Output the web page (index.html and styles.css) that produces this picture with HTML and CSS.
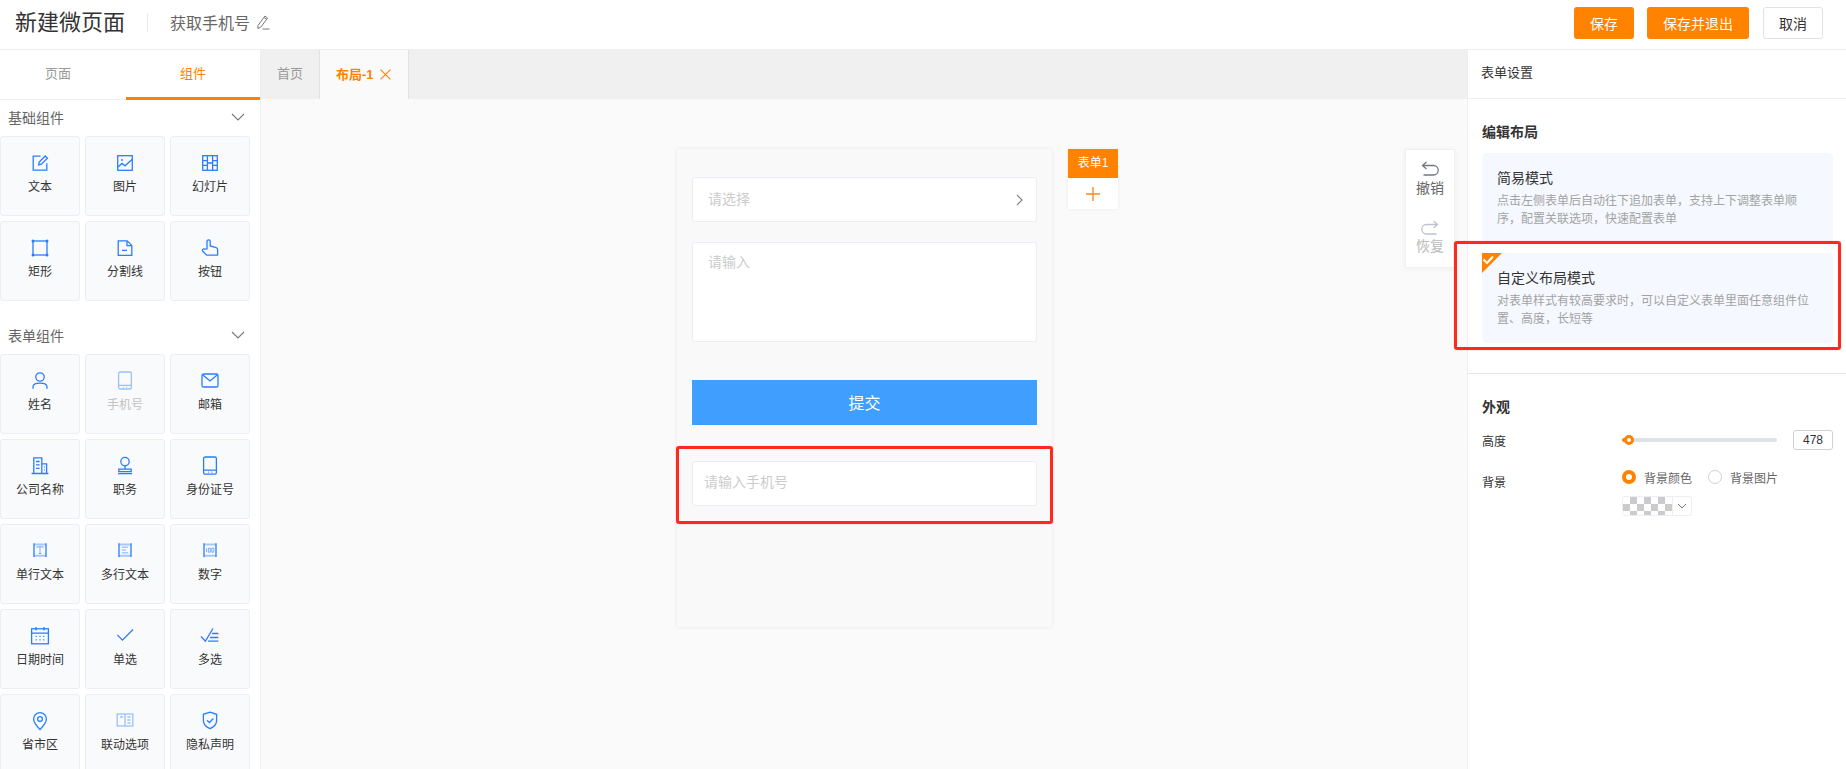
FILE: index.html
```html
<!DOCTYPE html>
<html lang="zh-CN">
<head>
<meta charset="utf-8">
<title>新建微页面</title>
<link rel="stylesheet" href="styles.css">
</head>
<body>
<div class="app">
  <header class="topbar">
    <h1 class="page-title">新建微页面</h1>
    <span class="top-divider"></span>
    <span class="page-name">获取手机号</span>
    <svg class="edit-ic" viewBox="0 0 14 16"><path d="M2 11.5L9 2l2.6 2L4.6 13.4 1.8 14.4z"/><path d="M8 3.4l2.6 2"/><path d="M6.5 15h7"/></svg>
    <div class="top-actions">
      <button class="btn btn-primary btn-save">保存</button>
      <button class="btn btn-primary btn-exit">保存并退出</button>
      <button class="btn btn-plain">取消</button>
    </div>
  </header>
  <main class="workspace">
    <aside class="sidebar">
      <div class="side-tabs">
        <div class="side-tab">页面</div>
        <div class="side-tab side-tab-on">组件</div>
      </div>
      <div class="group-head"><span>基础组件</span><svg class="chev" viewBox="0 0 14 8"><path d="M1 1l6 6 6-6"/></svg></div>
      <div class="comp-grid">
        <div class="comp"><svg class="ic" viewBox="0 0 20 20"><path d="M10.500 3.200H3.200v14h13.600v-7"/><path d="M8.600 11.800l.6-2.800 6-6 2.200 2.200-6 6z"/></svg><span>文本</span></div>
        <div class="comp"><svg class="ic" viewBox="0 0 20 20"><rect x="2.700" y="2.700" width="14.600" height="14.600"/><path d="M3 14l4-3.600 3 2.400 7-6.400"/><circle class="dot" cx="7" cy="7" r="1"/></svg><span>图片</span></div>
        <div class="comp"><svg class="ic" viewBox="0 0 20 20"><rect x="2.700" y="2.700" width="14.600" height="14.600"/><path d="M7.400 3v14M12.600 3v14M3 7.600h4.400M3 12.400h4.400M12.600 7.600H17M12.600 12.400H17M7.400 10h5.200"/></svg><span>幻灯片</span></div>
        <div class="comp"><svg class="ic" viewBox="0 0 20 20"><rect x="3" y="3" width="14" height="14"/><circle class="dot" cx="3" cy="3" r="1.500"/><circle class="dot" cx="17" cy="3" r="1.500"/><circle class="dot" cx="3" cy="17" r="1.500"/><circle class="dot" cx="17" cy="17" r="1.500"/></svg><span>矩形</span></div>
        <div class="comp"><svg class="ic" viewBox="0 0 20 20"><path d="M3.200 2.800h9l4.600 4.600v10H3.200z"/><path d="M12 3v4.600h4.600M7 12.400h5"/></svg><span>分割线</span></div>
        <div class="comp"><svg class="ic" viewBox="0 0 20 20"><path d="M7 11V3.400a1.600 1.600 0 0 1 3.200 0V8l6 1.600c1 .3 1.400 1 1.400 2v5.600H6.600L2.600 13c-.8-1.200.8-2.800 2-1.800z"/></svg><span>按钮</span></div>
      </div>
      <div class="group-head group-head-second"><span>表单组件</span><svg class="chev" viewBox="0 0 14 8"><path d="M1 1l6 6 6-6"/></svg></div>
      <div class="comp-grid">
        <div class="comp"><svg class="ic" viewBox="0 0 20 20"><circle cx="10" cy="6" r="4.200"/><path d="M3 17.800v-2c0-2.400 2.600-3.600 7-3.600s7 1.200 7 3.600v2"/></svg><span>姓名</span></div>
        <div class="comp comp-off"><svg class="ic" viewBox="0 0 20 20"><rect x="3.600" y="1" width="12.800" height="17" rx="1.600"/><path d="M4 14.400h12M8 16.400h.8M11.400 16.400h.8"/></svg><span>手机号</span></div>
        <div class="comp"><svg class="ic" viewBox="0 0 20 20"><rect x="2" y="3" width="16" height="13" rx="1.600"/><path d="M2.600 3.800L10 10l7.400-6.200"/></svg><span>邮箱</span></div>
        <div class="comp"><svg class="ic" viewBox="0 0 20 20"><path d="M1.600 17.500h16.800M3.800 17.500V1.900h8v15.600M11.800 7.900h4.800v9.600M6 5.500h3.600M6 8.900h3.600M6 12.300h3.600M14 10.900h.8M14 13.900h.8"/></svg><span>公司名称</span></div>
        <div class="comp"><svg class="ic" viewBox="0 0 20 20"><circle cx="10" cy="5.600" r="4.200"/><path d="M10 9.800v3.400M3.800 13.200h12.400v2.400H3.800zM3 17.600h14"/></svg><span>职务</span></div>
        <div class="comp"><svg class="ic" viewBox="0 0 20 20"><rect x="3.600" y="1" width="12.800" height="17.200" rx="1.600"/><path d="M4 14.200h12M8 16.200h.8M11.400 16.200h.8"/></svg><span>身份证号</span></div>
        <div class="comp"><svg class="ic" viewBox="0 0 20 20"><path class="soft" d="M4 3.500h12M4 14.700h12"/><path d="M4 2.300v13.600M16 2.300v13.600"/><path class="thin" d="M7 7V5.800h6V7M10 5.800v6.800M8.600 12.600h2.800"/></svg><span>单行文本</span></div>
        <div class="comp"><svg class="ic" viewBox="0 0 20 20"><path class="soft" d="M4 3.500h12M4 14.700h12"/><path d="M4 2.300v13.600M16 2.300v13.600"/><path class="thin" d="M6.800 6.200h6.400M6.800 9h4.200M6.800 11.800h6.400"/></svg><span>多行文本</span></div>
        <div class="comp"><svg class="ic" viewBox="0 0 20 20"><path class="soft" d="M4 3.500h12M4 14.700h12"/><path d="M4 2.300v13.600M16 2.300v13.600"/><path class="thin" d="M6.600 7.200v4M8.400 7.200h2v4h-2zM11.800 7.200h2v4h-2z"/></svg><span>数字</span></div>
        <div class="comp"><svg class="ic" viewBox="0 0 20 20"><rect x="1.600" y="2.800" width="16.800" height="15"/><path d="M2 7.200h16M6 1v3.400M14 1v3.400M5.600 10.400h1.200M9.400 10.400h1.200M13.200 10.400h1.200M5.600 13.800h1.200M9.400 13.800h1.200M13.200 13.800h1.200"/></svg><span>日期时间</span></div>
        <div class="comp"><svg class="ic" viewBox="0 0 20 20"><path d="M2.400 8.900l5 5.200L18 3.500"/></svg><span>单选</span></div>
        <div class="comp"><svg class="ic" viewBox="0 0 20 20"><path d="M1 10.500l4.400 4.600L13 2.500M12 7.500h6.400M10 11.500h8.400M8 15.100h10.400"/></svg><span>多选</span></div>
        <div class="comp"><svg class="ic" viewBox="0 0 20 20"><path d="M10 18.500c-3.400-3.400-6.400-6.600-6.400-10.400a6.400 6.400 0 0 1 12.800 0c0 3.800-3 7-6.400 10.400z"/><circle cx="10" cy="8.100" r="2.400"/></svg><span>省市区</span></div>
        <div class="comp comp-soft"><svg class="ic" viewBox="0 0 20 20"><rect x="2.200" y="3" width="15.600" height="12"/><path d="M10 3v12M5 6h3M12.400 6h3M12.400 9h3M12.400 12h3"/></svg><span>联动选项</span></div>
        <div class="comp"><svg class="ic" viewBox="0 0 20 20"><path d="M10 1.100l6.600 2.200v6.400c0 3.400-2.800 6.200-6.600 8-3.800-1.800-6.600-4.600-6.600-8V3.300z"/><path d="M7 9.300l2.400 2.200L13.400 7.500"/></svg><span>隐私声明</span></div>
      </div>
    </aside>

    <section class="stage">
      <div class="stage-tabs">
        <div class="stage-tab stage-tab-home">首页</div>
        <div class="stage-tab stage-tab-on">布局-1<svg class="close-ic" viewBox="0 0 10 10"><path d="M.5.500l9 9M9.500.500l-9 9"/></svg></div>
      </div>
      <div class="canvas">
        <div class="phone">
          <div class="field field-select"><span>请选择</span><svg class="arrow-ic" viewBox="0 0 7 12"><path d="M1 1l5 5-5 5"/></svg></div>
          <div class="field field-area">请输入</div>
          <button class="submit">提交</button>
          <div class="field field-phone">请输入手机号</div>
        </div>
        <div class="form-tabs">
          <div class="form-tab">表单1</div>
          <div class="form-add"><svg class="plus-ic" viewBox="0 0 14 14"><path d="M7 0v14M0 7h14"/></svg></div>
        </div>
        <div class="history">
          <div class="hist-item"><svg class="hist-ic" viewBox="0 0 18 16"><path d="M5.500 1L1.500 4.500l4 3.500"/><path d="M2 4.500h10.500a4.500 4.500 0 0 1 0 9.500H2.500"/></svg><span>撤销</span></div>
          <div class="hist-item hist-off"><svg class="hist-ic" viewBox="0 0 18 16"><path d="M12.500 1l4 3.500-4 3.500"/><path d="M16 4.500H5.500a4.500 4.500 0 0 0 0 9.500H15.500"/></svg><span>恢复</span></div>
        </div>
      </div>
    </section>

    <aside class="settings">
      <div class="settings-title">表单设置</div>
      <div class="layout-block">
        <h2 class="block-title">编辑布局</h2>
        <div class="mode-card">
          <div class="mode-name">简易模式</div>
          <p class="mode-desc">点击左侧表单后自动往下追加表单，支持上下调整表单顺序，配置关联选项，快速配置表单</p>
        </div>
        <div class="mode-card mode-card-on">
          <svg class="mode-flag" viewBox="0 0 20 20"><path class="flag-bg" d="M0 0h20L0 20z"/><path class="flag-check" d="M1.500 6.500l3.500 3.500 6-6.500"/></svg>
          <div class="mode-name">自定义布局模式</div>
          <p class="mode-desc">对表单样式有较高要求时，可以自定义表单里面任意组件位置、高度，长短等</p>
        </div>
      </div>
      <div class="look-block">
        <h2 class="block-title">外观</h2>
        <div class="look-row">
          <span class="look-label">高度</span>
          <div class="slider"><span class="slider-fill"></span><span class="slider-thumb"></span></div>
          <div class="num-box">478</div>
        </div>
        <div class="bg-row">
          <span class="look-label bg-label">背景</span>
          <div class="bg-options">
            <div class="radios">
              <span class="radio radio-on"></span><span class="radio-text">背景颜色</span>
              <span class="radio radio-next"></span><span class="radio-text">背景图片</span>
            </div>
            <div class="swatch"><span class="swatch-color"></span><span class="swatch-arrow"><svg class="swatch-chev" viewBox="0 0 10 6"><path d="M1 1l4 4 4-4"/></svg></span></div>
          </div>
        </div>
      </div>
    </aside>
  </main>
  <div class="mark mark-phone"></div>
  <div class="mark mark-mode"></div>
</div>
</body>
</html>
```
FILE: styles.css
```css
* { box-sizing: border-box; }
html, body { margin: 0; height: 100%; }
body {
  font-family: "Liberation Sans", "Noto Sans CJK SC", sans-serif;
  color: #333;
  background: #fff;
  overflow: hidden;
}
.app { position: relative; width: 100%; height: 769px; display: flex; flex-direction: column; overflow: hidden; }
button { font-family: inherit; cursor: pointer; }

/* top bar */
.topbar { height: 50px; flex: none; display: flex; align-items: center; padding: 0 23px 3px 15px; border-bottom: 1px solid #eceef2; }
.page-title { margin: 0; font-size: 22px; font-weight: 400; color: #333; line-height: 30px; }
.top-divider { width: 1px; height: 18px; background: #e6e6e6; margin: 0 22px; }
.page-name { font-size: 16px; color: #666; margin-bottom: 2px; }
.edit-ic { width: 14px; height: 16px; margin: 0 0 3px 6px; fill: none; stroke: #777; stroke-width: 1; }
.top-actions { margin-left: auto; display: flex; gap: 13px; }
.btn { height: 32px; border-radius: 3px; font-size: 14px; padding: 0; border: 1px solid transparent; }
.btn-primary { background: #ff8200; color: #fff; }
.btn-save { width: 60px; }
.btn-exit { width: 102px; }
.btn-plain { width: 60px; background: #fff; color: #333; border-color: #e2e2e2; margin-left: 1px; }

.workspace { flex: 1; display: flex; min-height: 0; }

/* left side */
.sidebar { width: 261px; flex: none; border-right: 1px solid #eceef2; overflow: hidden; }
.side-tabs { display: flex; height: 50px; border-bottom: 1px solid #eceef2; }
.side-tab { flex: 0 0 126px; padding-right: 10px; font-size: 13px; color: #999; text-align: center; line-height: 47px; }
.side-tab-on { flex: 0 0 134px; padding-right: 0; color: #ff8200; border-bottom: 3px solid #ff8200; height: 50px; }
.group-head { height: 36px; display: flex; align-items: center; justify-content: space-between; padding: 0 15px 2px 8px; width: 260px; font-size: 14px; color: #666; }
.group-head-second { margin-top: 17px; }
.chev { width: 14px; height: 8px; fill: none; stroke: #777; stroke-width: 1.100; }
.comp-grid { display: grid; grid-template-columns: repeat(3, 80px); grid-auto-rows: 80px; gap: 5px; }
.comp { background: #f9fafb; border: 1px solid #eceef5; border-radius: 3px; display: flex; flex-direction: column; align-items: center; padding-top: 16px; font-size: 12px; color: #333; }
.comp span { margin-top: 5px; line-height: 18px; }
.comp-off span { color: #c2c2c2; }
.comp-off .ic, .comp-soft .ic { opacity: .45; }
.ic { width: 20px; height: 20px; fill: none; stroke: #2a7dff; stroke-width: 1.300; }
.ic .dot { fill: #2a7dff; stroke: none; }
.ic .thin { stroke-width: .8; opacity: .75; }
.ic .soft { stroke-width: 2; opacity: .4; }

/* stage */
.stage { flex: 1; min-width: 0; display: flex; flex-direction: column; background: #fafafa; }
.stage-tabs { height: 49px; flex: none; display: flex; background: #f0f0f0; }
.stage-tab { height: 49px; border-right: 1px solid #e3e3e3; font-size: 13px; line-height: 47px; }
.stage-tab-home { width: 59px; text-align: center; color: #999; }
.stage-tab-on { width: 89px; padding-left: 16px; background: #fafafa; color: #ff8200; font-weight: 700; display: flex; align-items: center; }
.close-ic { width: 11px; height: 11px; margin-left: 6px; fill: none; stroke: #ff8200; stroke-width: 1; }
.canvas { flex: 1; display: flex; align-items: flex-start; padding: 50px 12px 0 416px; min-height: 0; }

.phone { width: 375px; height: 478px; flex: none; background: #f9f9f9; padding: 28px 15px 0; box-shadow: 0 0 4px rgba(0, 0, 0, .08); }
.field { background: #fff; border: 1px solid #ebedf5; border-radius: 3px; font-size: 14px; color: #ccc; }
.field-select { height: 45px; display: flex; align-items: center; justify-content: space-between; padding: 0 13px 4px 15px; }
.arrow-ic { width: 7px; height: 12px; margin-top: 4px; fill: none; stroke: #888; stroke-width: 1.200; }
.field-area { height: 100px; margin-top: 20px; padding: 9px 15px; line-height: 20px; }
.submit { display: block; width: 345px; height: 45px; margin-top: 38px; border: 0; background: #409eff; color: #fff; font-size: 16px; padding: 0 0 2px; }
.field-phone { height: 45px; margin-top: 36px; padding: 0 11px; line-height: 41px; }

.form-tabs { width: 50px; flex: none; margin-left: 16px; background: #fff; box-shadow: 0 0 4px rgba(0, 0, 0, .06); }
.form-tab { height: 29px; background: #ff8200; color: #fff; font-size: 12px; line-height: 28px; text-align: center; }
.form-add { height: 30px; margin-top: 1px; display: flex; align-items: center; justify-content: center; }
.plus-ic { width: 14px; height: 14px; fill: none; stroke: #ff8a1e; stroke-width: 1.400; }

.history { width: 50px; height: 119px; flex: none; margin-left: auto; background: #fff; border: 1px solid #eef0f5; box-shadow: 0 1px 6px rgba(0, 0, 0, .05); display: flex; flex-direction: column; align-items: center; padding-top: 11px; gap: 19px; font-size: 14px; color: #666; }
.hist-item { display: flex; flex-direction: column; align-items: center; height: 40px; }
.hist-item span { line-height: 20px; margin-top: 1px; }
.hist-ic { width: 18px; height: 16px; fill: none; stroke: #6f7787; stroke-width: 1.300; }
.hist-off { color: #bbb; }
.hist-off span { margin-top: 0; }
.hist-off .hist-ic { stroke: #bdc1c9; }

/* right side */
.settings { width: 379px; flex: none; border-left: 1px solid #eceef2; background: #fff; }
.settings-title { height: 49px; border-bottom: 1px solid #eceef2; padding-left: 13px; font-size: 13px; line-height: 46px; color: #333; }
.layout-block { padding: 23px 13px 30px 14px; border-bottom: 1px solid #e4e5ea; }
.block-title { margin: 0; font-size: 14px; line-height: 20px; font-weight: 700; color: #333; }
.mode-card { position: relative; height: 90px; margin-top: 10px; padding: 15px; background: #f5f8fe; border-radius: 5px; }
.block-title + .mode-card { margin-top: 11px; }
.mode-name { font-size: 14px; line-height: 20px; color: #333; }
.mode-desc { margin: 4px 0 0; font-size: 12px; line-height: 18px; color: #a3a3a3; }
.mode-flag { position: absolute; left: 0; top: 0; width: 20px; height: 20px; }
.flag-bg { fill: #ff8200; }
.flag-check { fill: none; stroke: #fff; stroke-width: 2; }

.look-block { padding: 23px 13px 0 14px; }
.look-row { display: flex; align-items: center; margin-top: 13px; height: 20px; }
.look-label { flex: 0 0 140px; font-size: 12px; color: #333; }
.slider { position: relative; width: 155px; height: 4px; border-radius: 2px; background: #dfe1e8; }
.slider-fill { position: absolute; left: 0; top: 0; width: 8px; height: 4px; background: #ff8200; border-radius: 2px; }
.slider-thumb { position: absolute; left: 2px; top: -3px; width: 10px; height: 10px; border-radius: 50%; background: #fff; border: 3px solid #ff8200; }
.num-box { width: 40px; height: 20px; margin-left: 16px; border: 1px solid #cfcfd6; border-radius: 3px; font-size: 12px; text-align: center; line-height: 18px; color: #333; }
.bg-row { display: flex; margin-top: 17px; }
.bg-label { margin-top: 7px; line-height: 18px; }
.bg-options { display: flex; flex-direction: column; }
.radios { display: flex; align-items: center; height: 20px; font-size: 12px; color: #666; }
.radio { width: 14px; height: 14px; border-radius: 50%; border: 1px solid #cfd1d8; flex: none; }
.radio-on { border: 4px solid #ff8200; }
.radio-next { margin-left: 16px; }
.radio-text { margin-left: 8px; }
.swatch { display: flex; width: 70px; height: 20px; margin-top: 9px; border: 1px solid #eceef5; border-radius: 3px; overflow: hidden; }
.swatch-color { width: 49px; background: repeating-conic-gradient(#cbcbcb 0 25%, #fff 0 50%) 0 0 / 14px 14px; }
.swatch-arrow { flex: 1; display: flex; align-items: center; justify-content: center; background: #fff; border-left: 1px solid #eceef5; }
.swatch-chev { width: 10px; height: 6px; fill: none; stroke: #777; stroke-width: 1; }

/* red annotations laid over the screenshot */
.mark { position: absolute; border-style: solid; border-color: #ff2a1c; border-radius: 3px; pointer-events: none; box-shadow: 0 0 1px rgba(255, 42, 28, .6); }
.mark-phone { left: 676px; top: 446px; width: 377px; height: 78px; border-width: 3px; }
.mark-mode { left: 1454px; top: 241px; width: 387px; height: 109px; border-width: 3px; }
```
